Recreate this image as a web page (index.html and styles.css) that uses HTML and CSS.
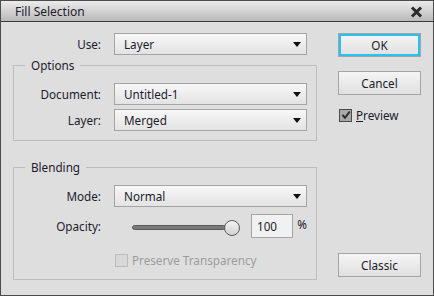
FILE: index.html
```html
<!DOCTYPE html>
<html lang="en">
<head>
  <meta charset="UTF-8" />
  <title>Fill Selection</title>
  <link rel="stylesheet" href="styles.css">
</head>
<body>

  <div class="dialog">

    <!-- Title bar -->
    <div class="titlebar">
      <span class="title">Fill Selection</span>
      <svg class="close" width="13" height="12" viewBox="0 0 13 12" aria-label="Close">
        <path d="M2 1.5 L11 10.5 M11 1.5 L2 10.5" stroke="#2b2b2b" stroke-width="3" stroke-linecap="butt" />
      </svg>
    </div>

    <div class="content">

      <!-- Left: settings -->
      <div class="main">
        <div class="row top">
          <label>Use:</label>
          <div class="select"><span>Layer</span><i class="arrow"></i></div>
        </div>

        <fieldset class="group options">
          <legend>Options</legend>
          <div class="row">
            <label>Document:</label>
            <div class="select"><span>Untitled-1</span><i class="arrow"></i></div>
          </div>
          <div class="row second">
            <label>Layer:</label>
            <div class="select"><span>Merged</span><i class="arrow"></i></div>
          </div>
        </fieldset>

        <fieldset class="group blending">
          <legend>Blending</legend>
          <div class="row">
            <label>Mode:</label>
            <div class="select"><span>Normal</span><i class="arrow"></i></div>
          </div>
          <div class="row opacity">
            <label>Opacity:</label>
            <div class="opacity-ctrl">
              <div class="slider">
                <div class="track"></div>
                <div class="thumb"></div>
              </div>
              <div class="field">100</div>
              <span class="pct">%</span>
            </div>
          </div>
          <div class="check disabled">
            <span class="box"></span>
            <span class="check-label">Preserve Transparency</span>
          </div>
        </fieldset>
      </div>

      <!-- Right: buttons -->
      <div class="side">
        <button class="btn ok">OK</button>
        <button class="btn cancel">Cancel</button>
        <div class="check preview">
          <span class="box checked">
            <svg width="10" height="10" viewBox="0 0 10 10">
              <path d="M1.5 5 L4 7.8 L8.8 1.5" fill="none" stroke="#2a2a2a" stroke-width="2" />
            </svg>
          </span>
          <span class="check-label"><u>P</u>review</span>
        </div>
        <button class="btn classic">Classic</button>
      </div>

    </div>
  </div>

</body>
</html>
```

FILE: styles.css
```css
/* Reset */
* {
  margin: 0;
  padding: 0;
  box-sizing: border-box;
}

:root {
  --color-bg: #dedede;
  --color-text: #1c1c2c;
  --color-border: #a4a4a4;
  --color-group: #bdbdbd;
  --color-focus: #26c3f2;
}

html, body {
  width: 434px;
  height: 296px;
  overflow: hidden;
  font-family: 'Noto Sans', 'Open Sans', sans-serif;
  font-size: 11.7px;
  color: var(--color-text);
  background: var(--color-bg);
}

/* Window */
.dialog {
  width: 434px;
  height: 296px;
  border: 1px solid #4b4b4b;
  display: flex;
  flex-direction: column;
  background: var(--color-bg);
}

.titlebar {
  height: 21px;
  flex-shrink: 0;
  border-bottom: 1px solid #3a3a3a;
  background: linear-gradient(#ebebeb, #b9b9b9);
  display: flex;
  align-items: center;
  justify-content: space-between;
  padding: 2px 10px 0 14px;
}

.title {
  font-size: 12px;
  line-height: 18px;
}

.close {
  display: block;
}

.content {
  flex: 1;
  display: flex;
  padding: 11px 0 0 12px;
}

/* Left column */
.main {
  width: 304px;
}

.row {
  display: grid;
  grid-template-columns: 88px 193px;
  column-gap: 13px;
  align-items: center;
}

.row label {
  text-align: right;
}

.group .row {
  grid-template-columns: 87px 193px;
}

.select {
  height: 22px;
  border: 1px solid var(--color-border);
  background: linear-gradient(#f7f7f7, #e3e3e3);
  display: flex;
  align-items: center;
  justify-content: space-between;
  padding: 0 5px 0 9px;
}

.arrow {
  width: 0;
  height: 0;
  border-left: 4.5px solid transparent;
  border-right: 4.5px solid transparent;
  border-top: 5px solid #111;
}

/* Groups */
.group {
  border: 1px solid var(--color-group);
  min-width: 0;
  padding: 10px 0 9px 0;
}

.group legend {
  margin-left: 11px;
  padding: 0 6px;
  line-height: 16px;
}

.options {
  margin-top: 2px;
}

.blending {
  margin-top: 18px;
  padding-bottom: 11px;
}

.row.second {
  margin-top: 4px;
}

/* Opacity */
.row.opacity {
  margin-top: 7px;
  height: 24px;
}

.opacity-ctrl {
  display: flex;
  align-items: center;
}

.slider {
  display: flex;
  align-items: center;
  margin-left: 18px;
  padding-top: 3px;
}

.track {
  width: 94px;
  height: 5px;
  border: 1px solid #5a5a5a;
  border-radius: 3px;
  background: #7a7a7a;
}

.thumb {
  width: 16px;
  height: 16px;
  margin-left: -2px;
  border: 1px solid #5a5a5a;
  border-radius: 50%;
  background: linear-gradient(#f4f4f4, #d2d2d2);
}

.field {
  width: 43px;
  height: 24px;
  margin-left: 11px;
  border: 1px solid var(--color-border);
  background: #f1f1f1;
  line-height: 22px;
  padding-left: 5px;
}

.pct {
  margin-left: 4px;
  align-self: flex-start;
  line-height: 16px;
  margin-top: 2px;
}

/* Checkboxes */
.check {
  display: flex;
  align-items: center;
  height: 16px;
}

.check .box {
  width: 13px;
  height: 13px;
  display: flex;
  align-items: center;
  justify-content: center;
}

.check .check-label {
  margin-left: 4px;
}

.check.disabled {
  margin-top: 14px;
  margin-left: 101px;
  color: #9c9c9c;
}

.check.disabled .box {
  border: 1px solid #bcbcbc;
  background: #d8d8d8;
}

.preview {
  margin-top: 12px;
  margin-left: 1px;
}

.box.checked {
  border: 1px solid #4a4a4a;
  background: #a9a9a9;
}

/* Right column */
.side {
  width: 83px;
  margin-left: 21px;
  display: flex;
  flex-direction: column;
  padding-bottom: 18px;
}

.btn {
  width: 83px;
  height: 24px;
  border: 1px solid var(--color-border);
  background: linear-gradient(#f5f5f5, #e0e0e0);
  font-family: inherit;
  font-size: 11.7px;
  color: var(--color-text);
}

.btn.ok {
  box-shadow: inset 0 0 0 2px var(--color-focus);
}

.btn.cancel {
  margin-top: 14px;
}

.btn.classic {
  margin-top: auto;
}
```
